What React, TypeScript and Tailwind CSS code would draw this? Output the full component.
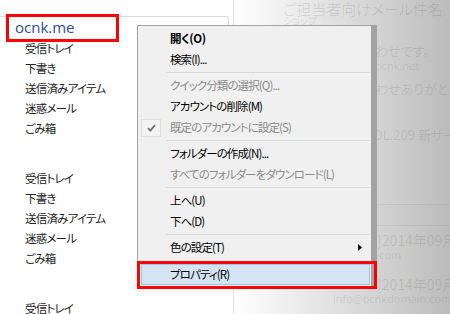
import React from "react";

const jp = "font-['Noto_Sans_CJK_JP',sans-serif] [font-feature-settings:'palt']";

type Item =
  | { kind: "item"; label: string; bold?: boolean; disabled?: boolean; checked?: boolean; sub?: boolean; active?: boolean }
  | { kind: "sep"; tall?: boolean };

const menu: Item[] = [
  { kind: "item", label: "開く(O)", bold: true },
  { kind: "item", label: "検索(I)..." },
  { kind: "sep" },
  { kind: "item", label: "クイック分類の選択(Q)...", disabled: true },
  { kind: "item", label: "アカウントの削除(M)" },
  { kind: "item", label: "既定のアカウントに設定(S)", disabled: true, checked: true },
  { kind: "sep" },
  { kind: "item", label: "フォルダーの作成(N)..." },
  { kind: "item", label: "すべてのフォルダーをダウンロード(L)", disabled: true },
  { kind: "sep" },
  { kind: "item", label: "上へ(U)" },
  { kind: "item", label: "下へ(D)" },
  { kind: "sep" },
  { kind: "item", label: "色の設定(T)", sub: true },
  { kind: "sep", tall: true },
  { kind: "item", label: "プロパティ(R)", active: true },
];

const folders = ["受信トレイ", "下書き", "送信済みアイテム", "迷惑メール", "ごみ箱"];

function FolderGroup() {
  return (
    <ul className="pl-[25px]">
      {folders.map((f) => (
        <li key={f} className="h-[20px] leading-[20px] text-[11.5px] tracking-[-0.8px] text-[#222]">
          {f}
        </li>
      ))}
    </ul>
  );
}

function ContextMenu() {
  return (
    <div className="absolute left-[137px] top-[25px] w-[235px] border border-[#a3a3a3] bg-[#f0f0f0] pt-[2px] pb-[2px] shadow-[5px_0_0_#a2a2a2]">
      {menu.map((m, i) => {
        if (m.kind === "sep") {
          return (
            <div key={i} className={`flex items-center pl-[28px] pr-[1px] ${m.tall ? "h-[6px]" : "h-[5px]"}`}>
              <div className="h-px w-full bg-[#d9d9d9]" />
            </div>
          );
        }
        if (m.active) {
          return (
            <div
              key={i}
              className="ml-[3px] mr-px flex h-[21px] items-center border border-[#9cc3e8] bg-[#d5e4f3] pl-[28px] text-[11.5px] tracking-[-0.9px] text-black"
            >
              {m.label}
            </div>
          );
        }
        return (
          <div key={i} className="flex h-[21px] items-center pr-[9px] text-[11.5px] tracking-[-0.9px]">
            <div className="flex w-[32px] shrink-0 items-center pl-[3px]">
              {m.checked && (
                <div className="flex h-[18px] w-[20px] items-center justify-center border border-[#dedede] bg-[#f3f3f3]">
                  <svg width="9" height="8" viewBox="0 0 9 8">
                    <path d="M1 4.2 L3.4 6.6 L8 1.2" fill="none" stroke="#707070" strokeWidth="1.8" />
                  </svg>
                </div>
              )}
            </div>
            <span
              className={`flex-1 ${m.bold ? "font-bold tracking-[-0.4px]" : ""} ${m.disabled ? "text-[#8a8a8a]" : "text-black"}`}
            >
              {m.label}
            </span>
            {m.sub && (
              <svg width="4" height="7" viewBox="0 0 4 7">
                <path d="M0 0 L4 3.5 L0 7 Z" fill="#111" />
              </svg>
            )}
          </div>
        );
      })}
    </div>
  );
}

export default function App() {
  return (
    <div className={`relative flex h-[314px] w-[450px] overflow-hidden bg-white ${jp}`}>
      {/* folder pane */}
      <div className="w-[234px] shrink-0 border-r border-[#e2e2e2] pt-[16px]">
        <div className="flex h-[22px] w-[229px] items-center rounded-tr-[3px] border-t border-r border-[#dcdcdc]">
          <span className="ml-[15px] font-['Open_Sans',sans-serif] text-[15px] leading-none text-[#2d4f8c]">ocnk.me</span>
          <span className="ml-[62px] mt-[12px] text-[11px] text-[#444]">送信済み</span>
        </div>
        <FolderGroup />
        <div className="h-[30px]" />
        <FolderGroup />
        <div className="h-[30px]" />
        <FolderGroup />
      </div>

      {/* message pane */}
      <div className="flex-1 bg-linear-to-r from-white via-[#cfcfcf] via-55% to-[#a5a5a5] pl-[49px] text-black/10">
        <div className="pt-[2px] text-[15px] leading-[14px] whitespace-nowrap">ご担当者向けメール件名</div>
        <div className="text-[10px] leading-[10px] whitespace-nowrap">ショップ</div>
        <div className="mt-[17px] pl-[92px] text-[13px] leading-[16px] whitespace-nowrap">わせです。</div>
        <div className="pl-[92px] text-[11px] leading-[14px] font-['Open_Sans',sans-serif] whitespace-nowrap">ocnk.net</div>
        <div className="mt-[8px] pl-[92px] text-[13px] leading-[16px] whitespace-nowrap">わせありがとうございます</div>
        <div className="mt-[30px] pl-[90px] text-[13px] leading-[16px] whitespace-nowrap">OL.209 新サービス</div>
        <div className="mt-[61px] h-px bg-black/5" />
        <div className="mt-[20px] h-px bg-black/5" />
        <div className="mt-[6px] pl-[94px] text-[14px] leading-[16px] whitespace-nowrap">]2014年09月</div>
        <div className="pl-[96px] text-[11px] leading-[14px] font-['Open_Sans',sans-serif]">com</div>
        <div className="mt-[14px] pl-[94px] text-[14px] leading-[16px] whitespace-nowrap">]2014年09月</div>
        <div className="pl-[50px] text-[11px] leading-[14px] font-['Open_Sans',sans-serif] whitespace-nowrap">info@ocnkdomain.com</div>
      </div>

      <ContextMenu />

      {/* annotation boxes */}
      <div className="absolute left-[6px] top-[14px] h-[28px] w-[113px] border-[3px] border-[#ff0000]" />
      <div className="absolute left-[137px] top-[261px] h-[28px] w-[240px] border-[3px] border-[#ff0000]" />
    </div>
  );
}
